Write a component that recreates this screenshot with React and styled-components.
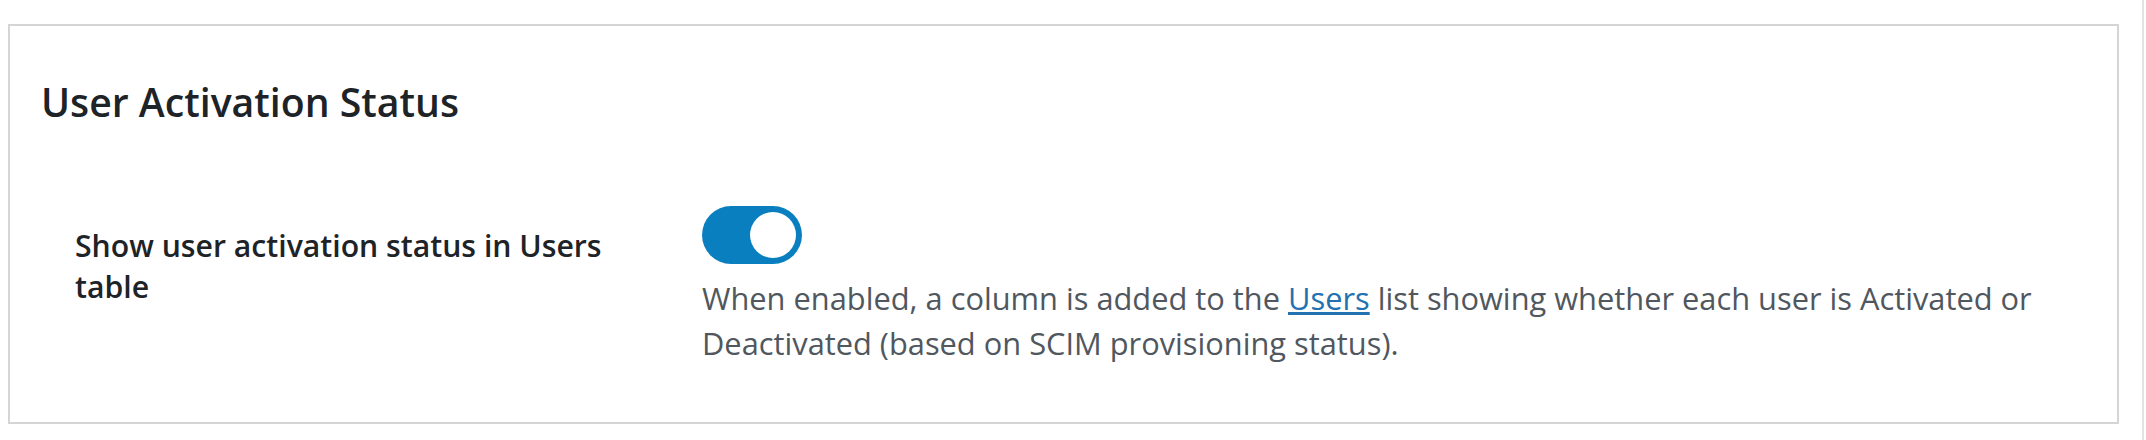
import React, { useState } from "react";
import styled, { createGlobalStyle } from "styled-components";

const GlobalStyle = createGlobalStyle`
  html, body {
    margin: 0;
    padding: 0;
    background: #ffffff;
  }
  body {
    font-family: "Open Sans", "Noto Sans", "Liberation Sans", sans-serif;
    color: #1d2327;
  }
`;

const Page = styled.div`
  display: flex;
  height: 440px;
  box-sizing: border-box;
`;

const Main = styled.main`
  flex: 1;
  padding: 24px 23px 0 8px;
`;

const Rail = styled.div`
  width: 2px;
  border-left: 2px solid #e2e2e2;
`;

const Card = styled.section`
  box-sizing: border-box;
  height: 400px;
  border: 2px solid #d5d5d5;
  background: #ffffff;
  padding: 0 31px;
`;

const Title = styled.h2`
  margin: 52px 0 80px;
  font-size: 39.2px;
  line-height: 48px;
  font-weight: 600;
  color: #1d2327;
`;

const SettingRow = styled.div`
  display: grid;
  grid-template-columns: 627px 1fr;
  margin-left: 34px;
`;

const Label = styled.label`
  padding-top: 19px;
  font-size: 30.2px;
  line-height: 41px;
  font-weight: 600;
  color: #1d2327;
  max-width: 560px;
`;

const Field = styled.div`
  display: flex;
  flex-direction: column;
  align-items: flex-start;
`;

const Track = styled.button`
  position: relative;
  width: 100px;
  height: 58px;
  padding: 0;
  border: none;
  border-radius: 29px;
  background: ${(p) => (p.$on ? "#0a7fbf" : "#8c8f94")};
  cursor: pointer;
`;

const Knob = styled.span`
  position: absolute;
  top: 6px;
  left: ${(p) => (p.$on ? "48px" : "6px")};
  width: 46px;
  height: 46px;
  border-radius: 50%;
  background: #ffffff;
`;

const Description = styled.p`
  margin: 12px 0 0;
  font-size: 30.8px;
  line-height: 45px;
  color: #50575e;
  max-width: 1400px;
`;

const Link = styled.a`
  color: #2271b1;
  text-decoration: underline;
`;

export default function App() {
  const [on, setOn] = useState(true);
  return (
    <>
      <GlobalStyle />
      <Page>
        <Main>
          <Card>
            <Title>User Activation Status</Title>
            <SettingRow>
              <Label htmlFor="activation-toggle">
                Show user activation status in Users table
              </Label>
              <Field>
                <Track
                  id="activation-toggle"
                  type="button"
                  role="switch"
                  aria-checked={on}
                  $on={on}
                  onClick={() => setOn(!on)}
                >
                  <Knob $on={on} />
                </Track>
                <Description>
                  When enabled, a column is added to the <Link href="#users">Users</Link> list
                  showing whether each user is Activated or Deactivated (based on SCIM
                  provisioning status).
                </Description>
              </Field>
            </SettingRow>
          </Card>
        </Main>
        <Rail />
      </Page>
    </>
  );
}
